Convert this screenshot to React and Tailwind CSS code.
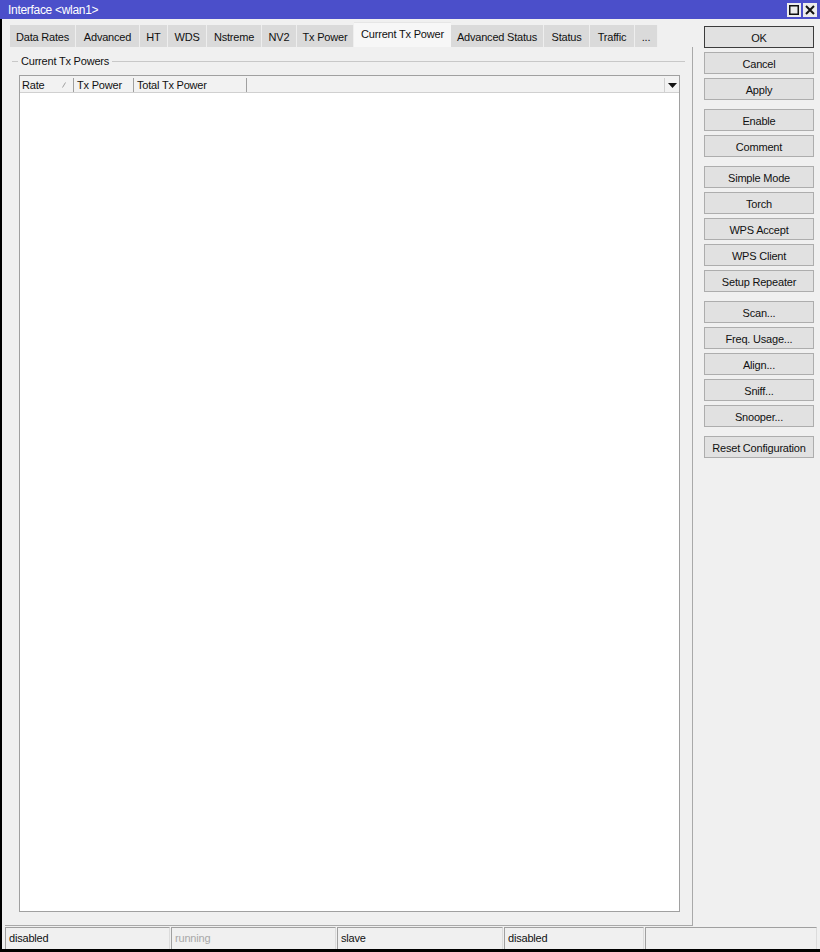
import React from "react";

const tabs = [
  { label: "Data Rates", w: "w-[66px]" },
  { label: "Advanced", w: "w-[64px]" },
  { label: "HT", w: "w-[28px]" },
  { label: "WDS", w: "w-[39px]" },
  { label: "Nstreme", w: "w-[55px]" },
  { label: "NV2", w: "w-[35px]" },
  { label: "Tx Power", w: "w-[57px]" },
  { label: "Current Tx Power", w: "w-[97px]", active: true },
  { label: "Advanced Status", w: "w-[93px]" },
  { label: "Status", w: "w-[46px]" },
  { label: "Traffic", w: "w-[45px]" },
  { label: "...", w: "w-[23px]" },
];

const buttonGroups = [
  ["OK", "Cancel", "Apply"],
  ["Enable", "Comment"],
  ["Simple Mode", "Torch", "WPS Accept", "WPS Client", "Setup Repeater"],
  ["Scan...", "Freq. Usage...", "Align...", "Sniff...", "Snooper..."],
  ["Reset Configuration"],
];

const statusCells = [
  { text: "disabled", w: "w-[165px]" },
  { text: "running", w: "w-[165px]", dim: true },
  { text: "slave", w: "w-[166px]" },
  { text: "disabled", w: "w-[140px]" },
  { text: "", w: "w-[172px]" },
];

function Button({ label }) {
  const isDefault = label === "OK";
  return (
    <div
      className={`h-[22px] w-[110px] pt-[2px] flex items-center justify-center bg-[#e1e1e1] border ${
        isDefault ? "border-[#3c3c3c]" : "border-[#adadad]"
      }`}
    >
      {label}
    </div>
  );
}

export default function App() {
  return (
    <div
      className="w-[820px] h-[952px] flex flex-col bg-[#f0f0f0] overflow-hidden text-[11px] text-[#111] tracking-[-0.2px]"
      style={{ fontFamily: '"Liberation Sans", Arial, sans-serif' }}
    >
      {/* Title bar */}
      <div className="h-[19px] shrink-0 bg-[#4b4fca] flex items-center justify-between pl-[8px] pr-[3px]">
        <span className="text-white text-[12px] tracking-[-0.3px]">Interface &lt;wlan1&gt;</span>
        <div className="flex gap-[2px]">
          <div className="w-[14px] h-[14px] bg-[#ececec] flex items-center justify-center">
            <svg width="10" height="10" viewBox="0 0 10 10">
              <rect x="0.75" y="0.75" width="8.5" height="8.5" fill="none" stroke="#111" strokeWidth="1.5" />
            </svg>
          </div>
          <div className="w-[14px] h-[14px] bg-[#ececec] flex items-center justify-center">
            <svg width="10" height="10" viewBox="0 0 10 10">
              <path d="M1 1 L9 9 M9 1 L1 9" stroke="#111" strokeWidth="2" />
            </svg>
          </div>
        </div>
      </div>

      {/* Window body */}
      <div className="flex-1 flex flex-col border-l-[2px] border-l-black border-b-[3px] border-b-black">
        <div className="h-[908px] flex">
          {/* Tabs and panel */}
          <div className="w-[691px] flex flex-col pl-[3px] pb-[1px]">
            <div className="h-[28px] flex items-end pl-[5px]">
              {tabs.map((t) =>
                t.active ? (
                  <div
                    key={t.label}
                    className={`${t.w} h-[25px] pb-[2px] flex items-center justify-center bg-[#f7f7f7] border-t border-[#e6e6e6]`}
                  >
                    {t.label}
                  </div>
                ) : (
                  <div
                    key={t.label}
                    className={`${t.w} h-[22px] pt-[2px] flex items-center justify-center bg-[#dadada] border-r border-[#eeeeee]`}
                  >
                    {t.label}
                  </div>
                )
              )}
            </div>

            <div className="flex-1 flex flex-col border-r border-b border-[#a9a9a9]">
              {/* Group caption */}
              <div className="mt-[7px] h-[14px] flex items-center mr-[7px]">
                <div className="ml-[7px] w-[6px] h-px bg-[#c8c8c8]" />
                <span className="px-[3px]">Current Tx Powers</span>
                <div className="flex-1 h-px bg-[#c8c8c8]" />
              </div>

              {/* Table */}
              <div className="mt-[7px] mb-[13px] ml-[14px] mr-[12px] flex-1 flex flex-col border border-[#a0a0a0] bg-white">
                <div className="h-[17px] pt-[2px] flex bg-[#f2f2f2] border-b border-[#d0d0d0]">
                  <div className="w-[54px] flex items-center justify-between pl-[2px] pr-[7px] border-r border-[#a0a0a0]">
                    <span>Rate</span>
                    <svg width="4" height="6" viewBox="0 0 4 6">
                      <path d="M0.5 5.5 L3.5 0.5" stroke="#a0a0a0" strokeWidth="1" />
                    </svg>
                  </div>
                  <div className="w-[60px] flex items-center pl-[3px] border-r border-[#a0a0a0]">Tx Power</div>
                  <div className="w-[113px] flex items-center pl-[3px] border-r border-[#a0a0a0]">Total Tx Power</div>
                  <div className="flex-1" />
                  <div className="w-[15px] flex items-center justify-center border-l border-[#d0d0d0]">
                    <svg width="9" height="5" viewBox="0 0 9 5">
                      <path d="M0 0 H9 L4.5 5 Z" fill="#111" />
                    </svg>
                  </div>
                </div>
                <div className="flex-1" />
              </div>
            </div>
          </div>

          {/* Action buttons */}
          <div className="flex-1 flex flex-col pl-[11px] pt-[7px] gap-[9px]">
            {buttonGroups.map((group, i) => (
              <div key={i} className="flex flex-col gap-[4px]">
                {group.map((b) => (
                  <Button key={b} label={b} />
                ))}
              </div>
            ))}
          </div>
        </div>

        {/* Status bar */}
        <div className="h-[22px] flex gap-[1px] pl-[3px]">
          {statusCells.map((c, i) => (
            <div
              key={i}
              className={`${c.w} h-full flex items-center pl-[3px] border-t border-l border-[#a0a0a0] border-r border-r-[#dcdcdc] ${
                c.dim ? "text-[#a8a8a8]" : ""
              }`}
            >
              {c.text}
            </div>
          ))}
        </div>
      </div>
    </div>
  );
}
